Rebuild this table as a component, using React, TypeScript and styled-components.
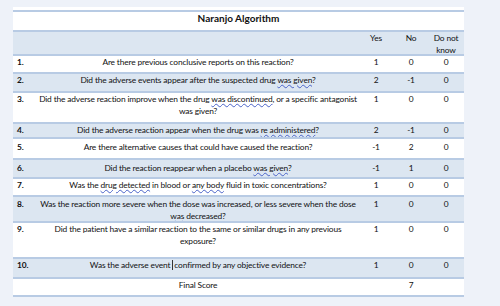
import React from "react";
import styled, { createGlobalStyle } from "styled-components";

const Global = createGlobalStyle`
  html, body { margin: 0; padding: 0; background: #eef2f9; }
  body { font-family: "Lato", "Liberation Sans", sans-serif; }
`;

const Page = styled.div`
  width: 500px;
  height: 306px;
  padding: 7px 0 0 13px;
  box-sizing: border-box;
  background: #eef2f9;
`;

const Table = styled.div`
  width: 451px;
  background: #ffffff;
  padding-top: 3px;
  display: flex;
  flex-direction: column;
  border-bottom: 2px solid #b8cbe4;
  color: #111111;
  font-size: 8.4px;
  letter-spacing: -0.15px;
  line-height: 12px;
`;

const TitleRow = styled.div`
  height: 20px;
  box-sizing: border-box;
  border-top: 2px solid #b8cbe4;
  text-align: center;
  font-weight: 700;
  font-size: 10px;
  letter-spacing: 0;
  line-height: 13px;
`;

const Row = styled.div<{ $h: number; $blue?: boolean; $pad?: number }>`
  display: grid;
  grid-template-columns: 25px 320px 36px 34px 36px;
  height: ${(p) => p.$h}px;
  box-sizing: border-box;
  border-top: 2px solid #b8cbe4;
  background: ${(p) => (p.$blue ? "#dce6f1" : "#ffffff")};
  padding-top: ${(p) => p.$pad ?? 0}px;
  align-items: start;
`;

const Num = styled.div`
  font-weight: 700;
  padding-left: 4px;
`;

const Question = styled.div`
  text-align: center;
  white-space: nowrap;
`;

const Val = styled.div`
  text-align: center;
  white-space: nowrap;
`;

const Spell = styled.span`
  text-decoration: underline wavy #4a63c8;
  text-decoration-thickness: 1px;
  text-underline-offset: 1px;
`;

const Caret = styled.span`
  display: inline-block;
  width: 1px;
  height: 10px;
  background: #333;
  vertical-align: -2px;
  margin: 0 1px 0 2px;
`;

type Q = {
  n: string;
  q: React.ReactNode;
  y: string;
  no: string;
  d: string;
  h: number;
  blue: boolean;
  pad?: number;
};

const rows: Q[] = [
  { n: "1.", q: "Are there previous conclusive reports on this reaction?", y: "1", no: "0", d: "0", h: 18, blue: false },
  { n: "2.", q: <>Did the adverse events appear after the suspected drug <Spell>was given</Spell>?</>, y: "2", no: "-1", d: "0", h: 19, blue: true },
  {
    n: "3.",
    q: <>Did the adverse reaction improve when the drug <Spell>was discontinued</Spell>, or a specific antagonist<br />was given?</>,
    y: "1", no: "0", d: "0", h: 31, blue: false,
  },
  { n: "4.", q: <>Did the adverse reaction appear when the drug was <Spell>re administered</Spell>?</>, y: "2", no: "-1", d: "0", h: 15, blue: true },
  { n: "5.", q: "Are there alternative causes that could have caused the reaction?", y: "-1", no: "2", d: "0", h: 21, blue: false, pad: 2 },
  { n: "6.", q: <>Did the reaction reappear when a placebo <Spell>was given</Spell>?</>, y: "-1", no: "1", d: "0", h: 19, blue: true, pad: 2 },
  { n: "7.", q: <>Was the <Spell>drug detected</Spell> in blood or <Spell>any body</Spell> fluid in toxic concentrations?</>, y: "1", no: "0", d: "0", h: 18, blue: false },
  {
    n: "8.",
    q: <>Was the reaction more severe when the dose was increased, or less severe when the dose<br /><Spell>was</Spell> decreased?</>,
    y: "1", no: "0", d: "0", h: 26, blue: true, pad: 1,
  },
  {
    n: "9.",
    q: <>Did the patient have a similar reaction to the same or similar drugs in any previous<br />exposure?</>,
    y: "1", no: "0", d: "0", h: 36, blue: false,
  },
  { n: "10.", q: <>Was the adverse event<Caret />confirmed by any objective evidence?</>, y: "1", no: "0", d: "0", h: 20, blue: true },
];

export default function App() {
  return (
    <Page>
      <Global />
      <Table>
        <TitleRow>Naranjo Algorithm</TitleRow>
        <Row $h={24} $blue>
          <Num />
          <Question />
          <Val>Yes</Val>
          <Val>No</Val>
          <Val>Do not<br />know</Val>
        </Row>
        {rows.map((r) => (
          <Row key={r.n} $h={r.h} $blue={r.blue} $pad={r.pad}>
            <Num>{r.n}</Num>
            <Question>{r.q}</Question>
            <Val>{r.y}</Val>
            <Val>{r.no}</Val>
            <Val>{r.d}</Val>
          </Row>
        ))}
        <Row $h={18}>
          <Num />
          <Question>Final Score</Question>
          <Val />
          <Val>7</Val>
          <Val />
        </Row>
      </Table>
    </Page>
  );
}
